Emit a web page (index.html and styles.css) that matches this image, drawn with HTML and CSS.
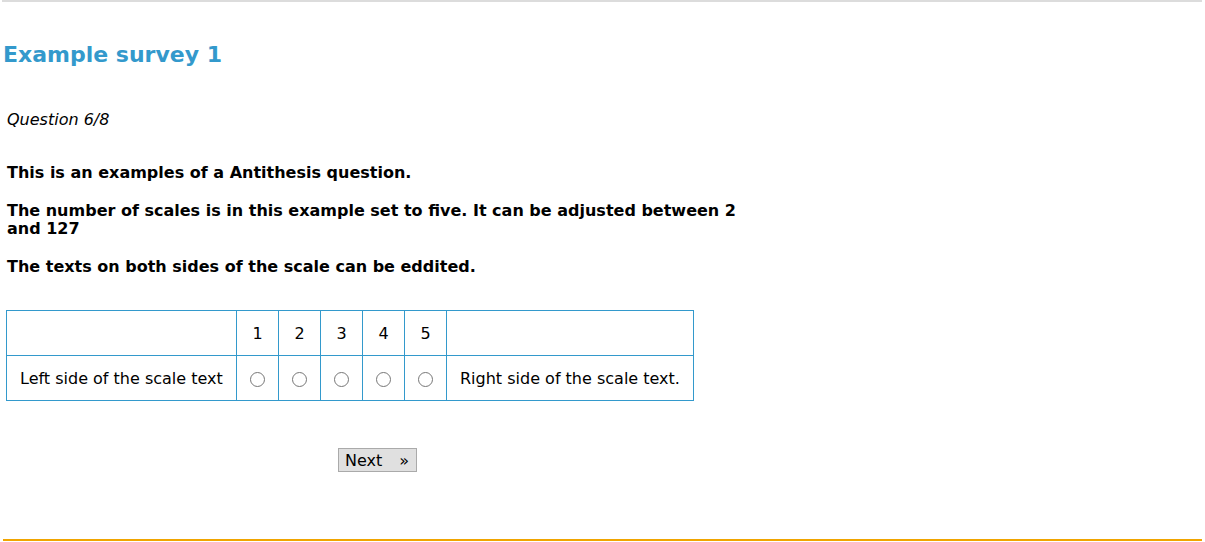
FILE: index.html
```html
<!DOCTYPE html>
<html lang="en">
<head>
    <meta charset="UTF-8">
    <meta name="viewport" content="width=device-width, initial-scale=1.0">
    <title>Example survey 1</title>
    <link rel="stylesheet" href="styles.css">
</head>
<body>

    <div class="page">
        <div class="top-rule"></div>

        <h1 class="survey-title">Example survey 1</h1>

        <p class="progress">Question 6/8</p>

        <!-- Question text -->
        <div class="question-text">
            <p>This is an examples of a Antithesis question.</p>
            <p>The number of scales is in this example set to five. It can be adjusted between 2 and 127</p>
            <p>The texts on both sides of the scale can be eddited.</p>
        </div>

        <!-- Antithesis scale -->
        <table class="scale">
            <tr>
                <td class="side"></td>
                <td class="point">1</td>
                <td class="point">2</td>
                <td class="point">3</td>
                <td class="point">4</td>
                <td class="point">5</td>
                <td class="side"></td>
            </tr>
            <tr>
                <td class="side left">Left side of the scale text</td>
                <td class="point"><input type="radio" name="scale" value="1"></td>
                <td class="point"><input type="radio" name="scale" value="2"></td>
                <td class="point"><input type="radio" name="scale" value="3"></td>
                <td class="point"><input type="radio" name="scale" value="4"></td>
                <td class="point"><input type="radio" name="scale" value="5"></td>
                <td class="side right">Right side of the scale text.</td>
            </tr>
        </table>

        <div class="nav">
            <button class="next-btn" type="button">Next <span class="arrow">&raquo;</span></button>
        </div>

        <div class="bottom-rule"></div>
    </div>

</body>
</html>
```

FILE: styles.css
```css
/* General Styles */
body {
    font-family: 'DejaVu Sans', Verdana, sans-serif;
    margin: 0;
    padding: 0;
    background-color: #fff;
    color: #000;
}

.page {
    display: flex;
    flex-direction: column;
    height: 542px;
    padding: 0 3px 0 2px;
    box-sizing: border-box;
}

.top-rule {
    border-top: 2px solid #dcdcdc;
    margin-top: 0;
}

.survey-title {
    font-size: 22px;
    font-weight: bold;
    color: #3399cc;
    margin: 31px 0 0 1px;
    line-height: 44px;
}

.progress {
    font-style: italic;
    font-size: 16px;
    line-height: 19px;
    margin: 33px 0 0 5px;
}

.question-text {
    margin: 35px 0 0 5px;
    width: 740px;
}

.question-text p {
    font-size: 16px;
    font-weight: bold;
    line-height: 18px;
    margin: 0 0 20px 0;
}

/* Scale table */
.scale {
    align-self: flex-start;
    border-collapse: collapse;
    margin: 14px 0 0 4px;
    font-size: 16px;
}

.scale td {
    border: 1px solid #3399cc;
    height: 44px;
    padding: 0;
    text-align: center;
}

.scale .point {
    width: 41px;
}

.scale .side {
    padding: 0 13px;
    text-align: left;
}

.scale .left {
    width: 203px;
}

.scale input[type="radio"] {
    margin: 0;
    width: 15px;
    height: 15px;
    vertical-align: middle;
}

.nav {
    margin: 47px 0 0 336px;
}

.next-btn {
    font-family: 'DejaVu Sans', Verdana, sans-serif;
    font-size: 16px;
    background-color: #e0e0e0;
    border: 1px solid #aaa;
    padding: 2px 7px 1px 6px;
    cursor: pointer;
    color: #000;
    width: 79px;
    text-align: left;
    display: flex;
    justify-content: space-between;
}

.bottom-rule {
    margin-top: auto;
    margin-left: 1px;
    margin-bottom: 1px;
    border-top: 2px solid #f0a500;
}
```
